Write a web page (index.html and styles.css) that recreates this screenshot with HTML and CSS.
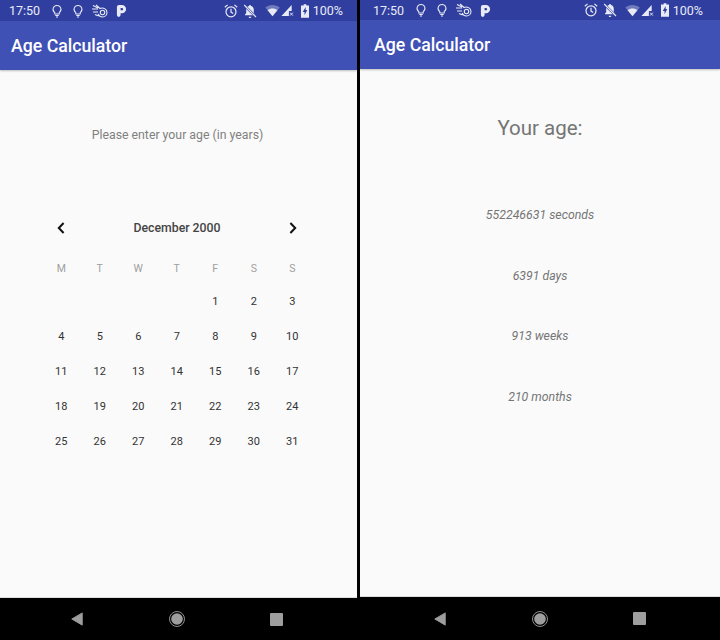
FILE: index.html
```html
<!DOCTYPE html>
<html lang="en">
<head>
    <meta charset="UTF-8">
    <title>Age Calculator</title>
    <link rel="stylesheet" href="styles.css">
</head>
<body>
    <svg class="sprites" width="0" height="0">
        <symbol id="bulb" viewBox="0 0 14 16">
            <path d="M7 1.5a4.6 4.6 0 0 0-2.6 8.4v1.6h5.2V9.900A4.6 4.6 0 0 0 7 1.5z" fill="none" stroke="currentColor" stroke-width="1.2"/>
            <path d="M5 13.2h4M5.800 15h2.400" stroke="currentColor" stroke-width="1.2"/>
        </symbol>
        <symbol id="swirl" viewBox="0 0 16 14">
            <path d="M1 1.500l5 2.500M0 5h6M1 8h5M3 10.500l3.500 1.500M4 1l4 3.500c3-1.500 7 .5 7 4 0 2.500-2 4.500-4.500 4.500S7 12 6 10" fill="none" stroke="currentColor" stroke-width="1.1"/>
            <circle cx="10.5" cy="8.5" r="2.2" fill="none" stroke="currentColor" stroke-width="1.1"/>
        </symbol>
        <symbol id="pee" viewBox="0 0 12 14">
            <path d="M1 3.200A2.200 2.200 0 0 1 3.200 1H6.500a4.500 4.500 0 0 1 0 9H5v2a1.900 1.900 0 0 1-4 0zM5 4.200v2.600h1.500a1.300 1.300 0 0 0 0-2.600z" fill="currentColor" fill-rule="evenodd"/>
        </symbol>
        <symbol id="alarm" viewBox="0 0 14 14">
            <circle cx="7" cy="7.8" r="5" fill="none" stroke="currentColor" stroke-width="1.2"/>
            <path d="M7 4.800v3.300l2.200 1.300M.8 3.200L3.600.9M13.200 3.200L10.400.9" fill="none" stroke="currentColor" stroke-width="1.2"/>
        </symbol>
        <symbol id="bell" viewBox="0 0 14 14">
            <path d="M7 1a1 1 0 0 1 1 1c2 .5 2.800 2 2.800 4v3.300l1.200 1.300v.6H2v-.6l1.200-1.300V6C3.200 4 4 2.500 6 2a1 1 0 0 1 1-1zM5.700 12.800h2.600a1.300 1.300 0 0 1-2.600 0z" fill="currentColor"/>
            <path d="M1 1l12 12" stroke="#303f9f" stroke-width="2.4"/>
            <path d="M1.200 1l11.800 12" stroke="currentColor" stroke-width="1.1"/>
        </symbol>
        <symbol id="wifi" viewBox="0 0 16 13">
            <path d="M8 12.500L.3 3.200C2.400 1.500 5 .5 8 .5s5.600 1 7.700 2.700z" fill="currentColor" opacity=".35"/>
            <path d="M8 12.500L2.800 6.200C4.200 5 6 4.300 8 4.300s3.800.7 5.200 1.900z" fill="currentColor"/>
        </symbol>
        <symbol id="signal" viewBox="0 0 14 14">
            <path d="M.5 13L11.500 1v6.500H8.500V13z" fill="currentColor"/>
            <path d="M9.800 9.300l3 3.200M12.800 9.300l-3 3.200" stroke="currentColor" stroke-width="1"/>
        </symbol>
        <symbol id="battery" viewBox="0 0 9 15">
            <path d="M3 0h3v1.300h3V15H0V1.300h3zM5.200 3L2 8.700h2v3.500L7 6.500H5.200z" fill="currentColor" fill-rule="evenodd"/>
        </symbol>
        <symbol id="back" viewBox="0 0 14 16">
            <path d="M13 1v14L1 8z" fill="currentColor" stroke="currentColor" stroke-linejoin="round"/>
        </symbol>
        <symbol id="home" viewBox="0 0 16 16">
            <circle cx="8" cy="8" r="7.5" fill="none" stroke="currentColor" stroke-width=".9"/>
            <circle cx="8" cy="8" r="5.8" fill="currentColor"/>
        </symbol>
        <symbol id="chev-left" viewBox="0 0 8 12">
            <path d="M6.600 1L1.800 6l4.800 5" fill="none" stroke="currentColor" stroke-width="2"/>
        </symbol>
        <symbol id="chev-right" viewBox="0 0 8 12">
            <path d="M1.400 1l4.800 5-4.800 5" fill="none" stroke="currentColor" stroke-width="2"/>
        </symbol>
    </svg>

    <div class="screens">
        <!-- Input screen -->
        <section class="phone phone-input">
            <div class="status-bar">
                <span class="clock">17:50</span>
                <svg class="ic ic-bulb"><use href="#bulb"/></svg>
                <svg class="ic ic-bulb"><use href="#bulb"/></svg>
                <svg class="ic ic-swirl"><use href="#swirl"/></svg>
                <svg class="ic ic-pee"><use href="#pee"/></svg>
                <span class="status-right">
                    <svg class="ic ic-alarm"><use href="#alarm"/></svg>
                    <svg class="ic ic-bell"><use href="#bell"/></svg>
                    <svg class="ic ic-wifi"><use href="#wifi"/></svg>
                    <svg class="ic ic-signal"><use href="#signal"/></svg>
                    <svg class="ic ic-battery"><use href="#battery"/></svg>
                    <span class="percent">100%</span>
                </span>
            </div>
            <header class="app-bar">Age Calculator</header>
            <main class="content">
                <p class="prompt">Please enter your age (in years)</p>
                <div class="calendar">
                    <div class="month-row">
                        <svg class="chev"><use href="#chev-left"/></svg>
                        <span class="month">December 2000</span>
                        <svg class="chev"><use href="#chev-right"/></svg>
                    </div>
                    <div class="weekdays">
                        <span>M</span><span>T</span><span>W</span><span>T</span><span>F</span><span>S</span><span>S</span>
                    </div>
                    <div class="days">
                        <span class="first-day">1</span><span>2</span><span>3</span>
                        <span>4</span><span>5</span><span>6</span><span>7</span><span>8</span><span>9</span><span>10</span>
                        <span>11</span><span>12</span><span>13</span><span>14</span><span>15</span><span>16</span><span>17</span>
                        <span>18</span><span>19</span><span>20</span><span>21</span><span>22</span><span>23</span><span>24</span>
                        <span>25</span><span>26</span><span>27</span><span>28</span><span>29</span><span>30</span><span>31</span>
                    </div>
                </div>
            </main>
            <nav class="nav-bar">
                <svg class="nav-ic nav-back"><use href="#back"/></svg>
                <svg class="nav-ic nav-home"><use href="#home"/></svg>
                <span class="nav-square"></span>
            </nav>
        </section>

        <!-- Result screen -->
        <section class="phone phone-result">
            <div class="status-bar">
                <span class="clock">17:50</span>
                <svg class="ic ic-bulb"><use href="#bulb"/></svg>
                <svg class="ic ic-bulb"><use href="#bulb"/></svg>
                <svg class="ic ic-swirl"><use href="#swirl"/></svg>
                <svg class="ic ic-pee"><use href="#pee"/></svg>
                <span class="status-right">
                    <svg class="ic ic-alarm"><use href="#alarm"/></svg>
                    <svg class="ic ic-bell"><use href="#bell"/></svg>
                    <svg class="ic ic-wifi"><use href="#wifi"/></svg>
                    <svg class="ic ic-signal"><use href="#signal"/></svg>
                    <svg class="ic ic-battery"><use href="#battery"/></svg>
                    <span class="percent">100%</span>
                </span>
            </div>
            <header class="app-bar">Age Calculator</header>
            <main class="content">
                <h2 class="age-title">Your age:</h2>
                <ul class="age-list">
                    <li>552246631 seconds</li>
                    <li>6391 days</li>
                    <li>913 weeks</li>
                    <li>210 months</li>
                </ul>
            </main>
            <nav class="nav-bar">
                <svg class="nav-ic nav-back"><use href="#back"/></svg>
                <svg class="nav-ic nav-home"><use href="#home"/></svg>
                <span class="nav-square"></span>
            </nav>
        </section>
    </div>
</body>
</html>
```

FILE: styles.css
```css
body {
    margin: 0;
    background-color: #000;
    font-family: Roboto, "Liberation Sans", sans-serif;
}

.sprites {
    display: block;
    height: 0;
}

.screens {
    display: flex;
    justify-content: space-between;
    width: 720px;
    height: 640px;
    overflow: hidden;
}

.phone {
    display: flex;
    flex-direction: column;
    height: 640px;
    background-color: #fafafa;
}

.phone-input {
    width: 357px;
}

.phone-result {
    width: 360px;
}

/* status bar */
.status-bar {
    display: flex;
    flex: none;
    align-items: center;
    height: 21px;
    padding: 0 14px 0 9px;
    background-color: #303f9f;
    color: #e8eaf6;
    font-size: 12.5px;
}

.phone-result .status-bar {
    height: 20px;
    padding-left: 13px;
    padding-right: 17px;
}

.clock {
    width: 38px;
}

.ic {
    display: block;
    flex: none;
}

.ic-bulb {
    width: 12px;
    height: 14px;
    margin-left: 4px;
    margin-right: 5px;
}

.ic-swirl {
    width: 16px;
    height: 14px;
    margin-left: 3px;
}

.ic-pee {
    width: 11px;
    height: 13px;
    margin-left: 8px;
}

.status-right {
    display: flex;
    align-items: center;
    margin-left: auto;
}

.ic-alarm {
    width: 14px;
    height: 14px;
}

.ic-bell {
    width: 14px;
    height: 14px;
    margin-left: 5px;
}

.ic-wifi {
    width: 15px;
    height: 13px;
    margin-left: 8px;
}

.ic-signal {
    width: 13px;
    height: 13px;
    margin-left: 1px;
}

.ic-battery {
    width: 8px;
    height: 14px;
    margin-left: 7px;
}

.percent {
    margin-left: 4px;
}

/* app bar */
.app-bar {
    flex: none;
    height: 49px;
    line-height: 50px;
    padding-left: 11px;
    background-color: #3f51b5;
    color: #fff;
    font-size: 17.7px;
    font-weight: 500;
    box-shadow: 0 1px 2px rgba(0, 0, 0, 0.25);
}

.phone-result .app-bar {
    padding-left: 14px;
}

.content {
    flex: 1;
    min-height: 0;
    border-bottom: 1px solid #ddd;
}

/* input screen */
.prompt {
    margin: 56px 0 0;
    padding-right: 2px;
    color: #808080;
    font-size: 12.3px;
    line-height: 18px;
    text-align: center;
}

.calendar {
    width: 270px;
    margin: 74px 0 0 42px;
}

.month-row {
    display: flex;
    align-items: center;
    justify-content: space-between;
    height: 20px;
    padding: 0 15px;
}

.month {
    color: #444;
    font-size: 12.3px;
    font-weight: 500;
}

.chev {
    width: 8px;
    height: 12px;
    color: #111;
}

.weekdays,
.days {
    display: grid;
    grid-template-columns: repeat(7, 38.5px);
    text-align: center;
}

.weekdays {
    margin-top: 23px;
    height: 16px;
    line-height: 16px;
    color: #9e9e9e;
    font-size: 10.5px;
}

.days {
    margin-top: 7px;
    grid-auto-rows: 35px;
    line-height: 35px;
    color: #333;
    font-size: 11px;
}

.first-day {
    grid-column: 5;
}

/* result screen */
.age-title {
    margin: 45px 0 0;
    color: #757575;
    font-size: 20.5px;
    font-weight: 400;
    line-height: 28px;
    text-align: center;
}

.age-list {
    margin: 63px 0 0;
    padding: 0;
    list-style: none;
    color: #757575;
    font-size: 12.3px;
    font-style: italic;
    text-align: center;
}

.age-list li {
    height: 60.5px;
    line-height: 20px;
}

/* navigation bar */
.nav-bar {
    display: flex;
    flex: none;
    align-items: center;
    height: 42px;
    background-color: #000;
    color: #9e9e9e;
}

.phone-result .nav-bar {
    height: 43px;
}

.nav-ic {
    display: block;
    flex: none;
}

.nav-back {
    width: 14px;
    height: 14px;
    margin-left: 70px;
}

.nav-home {
    width: 16px;
    height: 16px;
    margin-left: 85px;
}

.nav-square {
    width: 13px;
    height: 13px;
    margin-left: 85px;
    border-radius: 1px;
    background-color: #9e9e9e;
}

.phone-result .nav-back {
    margin-left: 73px;
}
```
